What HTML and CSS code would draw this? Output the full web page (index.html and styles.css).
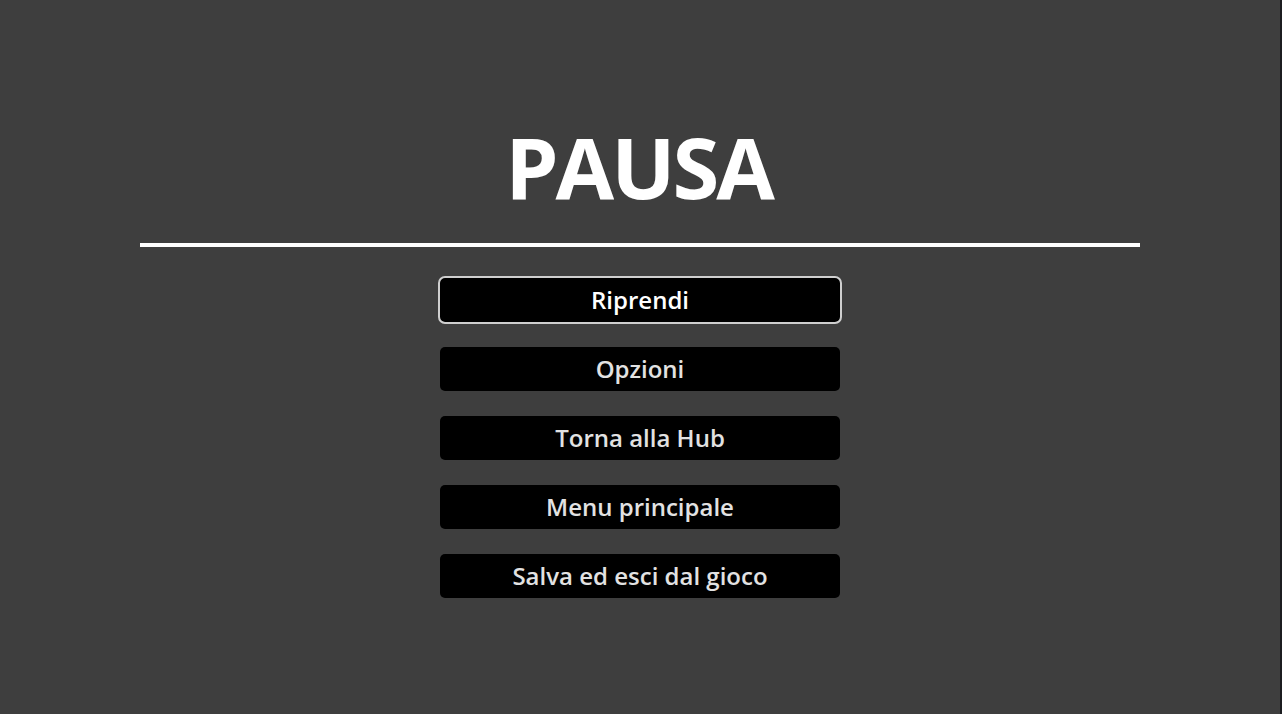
FILE: index.html
```html
<!DOCTYPE html>
<html lang="it">
<head>
    <meta charset="UTF-8">
    <meta name="viewport" content="width=device-width, initial-scale=1.0">
    <title>Pausa</title>
    <link rel="stylesheet" href="styles.css">
</head>
<body>
    <div class="pause-screen">
        <h1 class="pause-title">PAUSA</h1>
        <div class="divider"></div>

        <div class="pause-menu">
            <button class="menu-button focused">Riprendi</button>
            <button class="menu-button">Opzioni</button>
            <button class="menu-button">Torna alla Hub</button>
            <button class="menu-button">Menu principale</button>
            <button class="menu-button">Salva ed esci dal gioco</button>
        </div>
    </div>
    <div class="edge"></div>
</body>
</html>
```

FILE: styles.css
```css
html, body {
    height: 100%;
}

body {
    margin: 0;
    background-color: #3e3e3e;
    font-family: 'Open Sans', 'Noto Sans', sans-serif;
    overflow: hidden;
    position: relative;
}

.pause-screen {
    width: calc(100% - 2px);
    display: flex;
    flex-direction: column;
    align-items: center;
    padding-top: 124px;
}

.pause-title {
    margin: 0;
    font-size: 85px;
    font-weight: 700;
    line-height: 1;
    color: #ffffff;
    letter-spacing: -3px;
    text-indent: -3px;
}

.divider {
    width: 1000px;
    height: 4px;
    background-color: #ffffff;
    margin-top: 34px;
    margin-bottom: 31px;
}

.pause-menu {
    display: flex;
    flex-direction: column;
    gap: 25px;
}

.menu-button {
    width: 400px;
    height: 44px;
    background-color: #000000;
    color: #e2e2e2;
    border: none;
    border-radius: 5px;
    font-family: inherit;
    font-size: 24px;
    font-weight: 600;
    padding: 0 0 2px;
    cursor: pointer;
}

.menu-button.focused {
    color: #ffffff;
    outline: 2px solid #cfcfcf;
    outline-offset: 0;
}

/* thin dark strip at the right edge */
.edge {
    position: absolute;
    top: 0;
    right: 0;
    width: 2px;
    height: 100%;
    background-color: #1c1d20;
}
```
